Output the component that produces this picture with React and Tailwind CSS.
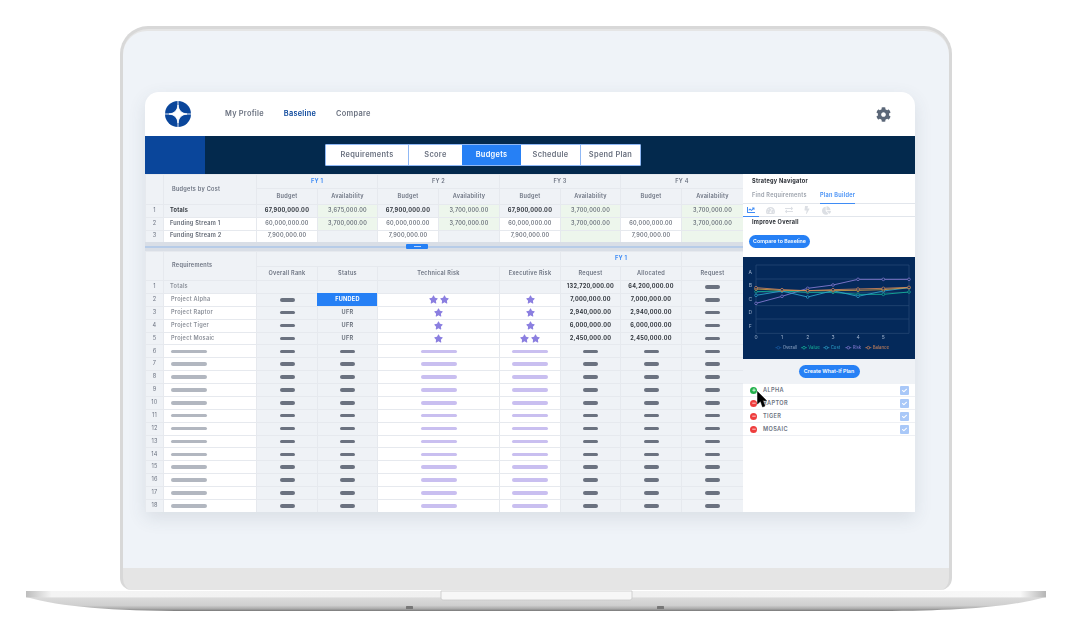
import React from "react";
import { FaCog, FaStar, FaChartLine, FaTachometerAlt, FaExchangeAlt, FaBolt, FaChartPie, FaPlus, FaMinus, FaCheck } from "react-icons/fa";

const Cell = ({ className = "", children }) => (
  <div className={"flex items-center justify-center border-l border-t border-[#e6e9ee] text-[5.6px] leading-none tracking-[0.25px] whitespace-nowrap " + className}>{children}</div>
);
const G = "bg-[#eff2f6]";
const GR = "bg-[#edf6ec]";
const W = "bg-white";
const Dark = () => <span className="block h-[3.5px] w-[15px] rounded-full bg-[#6b7280]" />;
const Gray = () => <span className="block h-[3.5px] w-[36px] rounded-full bg-[#b2b7c0]" />;
const Lav = () => <span className="block h-[3.5px] w-[36px] rounded-full bg-[#c9bff0]" />;
const Stars = ({ n }) => (
  <span className="flex items-center gap-[2px] text-[#8b7fe0]">
    {Array.from({ length: n }).map((_, i) => <FaStar key={i} size={9} />)}
  </span>
);
const num = "text-[#5f6672] font-medium";
const bold = "text-[#33383f] font-bold";

const upperRows = [
  { n: 1, label: "Totals", labelCls: `${G} text-[#33383f] font-bold`, numCls: G, cells: [["67,900,000.00", G, bold], ["3,675,000.00", GR, num], ["67,900,000.00", G, bold], ["3,700,000.00", GR, num], ["67,900,000.00", G, bold], ["3,700,000.00", GR, num], ["", G, num], ["3,700,000.00", GR, num]] },
  { n: 2, label: "Funding Stream 1", labelCls: `${W} text-[#5f6672] font-semibold`, numCls: G, cells: [["60,000,000.00", W, num], ["3,700,000.00", GR, num], ["60,000,000.00", W, num], ["3,700,000.00", GR, num], ["60,000,000.00", W, num], ["3,700,000.00", GR, num], ["60,000,000.00", W, num], ["3,700,000.00", GR, num]] },
  { n: 3, label: "Funding Stream 2", labelCls: `${W} text-[#5f6672] font-semibold`, numCls: G, cells: [["7,900,000.00", W, num], ["", G, num], ["7,900,000.00", W, num], ["", G, num], ["7,900,000.00", W, num], ["", GR, num], ["7,900,000.00", W, num], ["", GR, num]] },
];

const projects = {
  2: { name: "Project Alpha", status: "FUNDED", tech: 2, exec: 1, req: "7,000,000.00" },
  3: { name: "Project Raptor", status: "UFR", tech: 1, exec: 1, req: "2,940,000.00" },
  4: { name: "Project Tiger", status: "UFR", tech: 1, exec: 1, req: "6,000,000.00" },
  5: { name: "Project Mosaic", status: "UFR", tech: 1, exec: 2, req: "2,450,000.00" },
};

const Logo = () => (
  <svg width="26" height="26" viewBox="0 0 26 26">
    <circle cx="13" cy="13" r="13" fill="#0a469b" />
    <path d="M13 0V26M0 13H26" stroke="#fff" strokeWidth="0.9" />
    <path d="M13 4C13.8 9.6 16.4 12.2 22 13C16.4 13.8 13.8 16.4 13 22C12.2 16.4 9.6 13.8 4 13C9.6 12.2 12.2 9.6 13 4Z" fill="#fff" stroke="#fff" strokeWidth="0.8" />
  </svg>
);

const Upper = () => (
  <div className="grid grid-cols-[18px_93px_61px_60px_61px_61px_61px_60px_61px_62px] grid-rows-[14px_16px_13px_12.5px_12.5px]">
    <Cell className={`${G} row-span-2`} />
    <Cell className={`${G} row-span-2 justify-start pl-[8px] text-[#6b7280] font-semibold`}>Budgets by Cost</Cell>
    <Cell className={`${G} col-span-2 text-[#3f8cf5] font-bold`}>FY 1</Cell>
    <Cell className={`${G} col-span-2 text-[#6b7280] font-semibold`}>FY 2</Cell>
    <Cell className={`${G} col-span-2 text-[#6b7280] font-semibold`}>FY 3</Cell>
    <Cell className={`${G} col-span-2 text-[#6b7280] font-semibold`}>FY 4</Cell>
    {["Budget", "Availability", "Budget", "Availability", "Budget", "Availability", "Budget", "Availability"].map((t, i) => (
      <Cell key={i} className={`${G} text-[#6b7280] font-semibold`}>{t}</Cell>
    ))}
    {upperRows.map((r) => (
      <React.Fragment key={r.n}>
        <Cell className={`${r.numCls} text-[#6b7280]`}>{r.n}</Cell>
        <Cell className={`${r.labelCls} justify-start pl-[6px]`}>{r.label}</Cell>
        {r.cells.map(([t, bg, c], i) => <Cell key={i} className={`${bg} ${c}`}>{t}</Cell>)}
      </React.Fragment>
    ))}
  </div>
);

const Splitter = () => (
  <div className="flex h-[9px] items-center bg-[#d9dee6]">
    <div className="flex h-[2px] w-full items-center bg-[#b7cce8] pl-[261px]">
      <div className="flex h-[5px] w-[22px] shrink-0 items-center justify-center rounded-[1px] bg-[#2680f5]">
        <span className="block h-[1px] w-[7px] bg-[#bcd6fb]" />
      </div>
    </div>
  </div>
);

const Lower = () => {
  const rows = Array.from({ length: 18 }, (_, i) => i + 1);
  return (
    <div className="grid grid-cols-[18px_93px_61px_60px_122px_61px_60px_61px_62px] grid-rows-[15px_14px] auto-rows-[12.89px]">
      <Cell className={`${G} row-span-2`} />
      <Cell className={`${G} row-span-2 justify-start pl-[8px] text-[#6b7280] font-semibold`}>Requirements</Cell>
      <Cell className={`${G} col-span-4`} />
      <Cell className={`${G} col-span-2 text-[#3f8cf5] font-bold`}>FY 1</Cell>
      <Cell className={G} />
      {["Overall Rank", "Status", "Technical Risk", "Executive Risk", "Request", "Allocated", "Request"].map((t, i) => (
        <Cell key={i} className={`${G} text-[#6b7280] font-semibold`}>{t}</Cell>
      ))}
      {rows.map((n) => {
        const p = projects[n];
        if (n === 1) return (
          <React.Fragment key={n}>
            <Cell className={`${G} text-[#6b7280]`}>1</Cell>
            <Cell className={`${G} justify-start pl-[6px] text-[#8a8f98] font-semibold`}>Totals</Cell>
            <Cell className={G} /><Cell className={G} /><Cell className={G} /><Cell className={G} />
            <Cell className={`${G} ${bold}`}>132,720,000.00</Cell>
            <Cell className={`${G} ${bold}`}>64,200,000.00</Cell>
            <Cell className={G}><Dark /></Cell>
          </React.Fragment>
        );
        return (
          <React.Fragment key={n}>
            <Cell className={`${G} text-[#6b7280]`}>{n}</Cell>
            <Cell className={`${W} justify-start pl-[7px] text-[#8a8f98] font-semibold`}>{p ? p.name : <Gray />}</Cell>
            <Cell className={G}><Dark /></Cell>
            {p && p.status === "FUNDED" ? (
              <Cell className="border-transparent bg-[#2680f5] font-bold text-white">FUNDED</Cell>
            ) : (
              <Cell className={`${G} font-semibold text-[#5f6672]`}>{p ? p.status : <Dark />}</Cell>
            )}
            <Cell className={W}>{p ? <Stars n={p.tech} /> : <Lav />}</Cell>
            <Cell className={W}>{p ? <Stars n={p.exec} /> : <Lav />}</Cell>
            <Cell className={`${G} ${bold}`}>{p ? p.req : <Dark />}</Cell>
            <Cell className={`${G} ${bold}`}>{p ? p.req : <Dark />}</Cell>
            <Cell className={G}><Dark /></Cell>
          </React.Fragment>
        );
      })}
    </div>
  );
};

const X = [48, 126, 203, 279, 354, 430, 507];
const series = [
  { c: "#8d7fd8", y: [145, 124, 100, 90, 73, 73, 73] },
  { c: "#15b89c", y: [110, 108, 112, 112, 118, 118, 111] },
  { c: "#2fa8cf", y: [121, 108, 126, 107, 124, 108, 98] },
  { c: "#d9a441", y: [102, 106, 107, 107, 106, 104, 98] },
  { c: "#d98a5a", y: [98, 104, 107, 104, 102, 100, 97] },
];
const legend = [
  { x: 115, t: "Overall", c: "#1d5fa8" },
  { x: 192, t: "Value", c: "#15b89c" },
  { x: 259, t: "Cost", c: "#2fa8cf" },
  { x: 325, t: "Risk", c: "#8d7fd8" },
  { x: 385, t: "Balance", c: "#d98a5a" },
];

const Chart = () => (
  <svg width="172" height="102" viewBox="9 6 516 306" className="block bg-[#04295a]" style={{ fontFamily: "Inter, sans-serif" }}>
    {[30, 72, 112, 152, 192, 235].map((y) => <line key={y} x1="48" x2="507" y1={y} y2={y} stroke="#2c4d78" strokeWidth="2" />)}
    <line x1="48" x2="48" y1="30" y2="235" stroke="#2c4d78" strokeWidth="2" />
    <line x1="507" x2="507" y1="30" y2="235" stroke="#2c4d78" strokeWidth="2" />
    {["A", "B", "C", "D", "F"].map((t, i) => <text key={t} x="31" y={56 + i * 40.5} fill="#9fb2cc" fontSize="15" textAnchor="middle">{t}</text>)}
    {["0", "1", "2", "3", "4", "5"].map((t, i) => <text key={t} x={X[i]} y="252" fill="#9fb2cc" fontSize="15" textAnchor="middle">{t}</text>)}
    {series.map((s, i) => (
      <g key={i}>
        <polyline points={X.map((x, j) => `${x},${s.y[j]}`).join(" ")} fill="none" stroke={s.c} strokeWidth="2.5" />
        {X.map((x, j) => <circle key={j} cx={x} cy={s.y[j]} r="4" fill="#04295a" stroke={s.c} strokeWidth="2" />)}
      </g>
    ))}
    {legend.map((l) => (
      <g key={l.t}>
        <line x1={l.x - 9} x2={l.x + 9} y1="278" y2="278" stroke={l.c} strokeWidth="2" />
        <circle cx={l.x} cy="278" r="4" fill="#04295a" stroke={l.c} strokeWidth="2" />
        <text x={l.x + 13} y="282" fill={l.c === "#1d5fa8" ? "#8fa6c6" : l.c} fontSize="13">{l.t}</text>
      </g>
    ))}
  </svg>
);

const Plan = ({ name, add, children }) => (
  <div className="relative flex h-[13px] items-center border-b border-[#eef0f4] bg-white pl-[7px] pr-[6px]">
    <span className={"flex h-[7px] w-[7px] items-center justify-center rounded-full text-white " + (add ? "bg-[#22b04b]" : "bg-[#ee3d3d]")}>
      {add ? <FaPlus size={4} /> : <FaMinus size={4} />}
    </span>
    <span className="ml-[6px] text-[5.6px] font-semibold tracking-[0.35px] text-[#6b7280]">{name}</span>
    <span className="ml-auto flex h-[9px] w-[9px] items-center justify-center rounded-[1px] bg-[#a9c8f8] text-white"><FaCheck size={5} /></span>
    {children}
  </div>
);

const Side = () => (
  <div className="flex w-[172px] flex-col bg-white">
    <div className="flex h-[14px] items-center pl-[9px] pt-[1px] text-[5.6px] font-bold tracking-[0.25px] text-[#2a2e35]">Strategy Navigator</div>
    <div className="flex h-[16px] items-stretch border-b border-[#e2e6ec] pl-[9px] text-[5.6px] font-semibold tracking-[0.25px] whitespace-nowrap">
      <span className="flex w-[68px] items-center text-[#9aa0aa]">Find Requirements</span>
      <span className="-mb-px flex w-[35px] items-center border-b border-[#3f8cf5] text-[#3f8cf5]">Plan Builder</span>
    </div>
    <div className="flex h-[13px] items-stretch border-b border-[#e2e6ec] text-[#dcdfe4]">
      <span className="-mb-px flex w-[16px] items-center justify-center border-b border-[#3f8cf5] text-[#3f8cf5]"><FaChartLine size={8} /></span>
      <span className="ml-[6px] flex w-[10px] items-center justify-center"><FaTachometerAlt size={9} /></span>
      <span className="ml-[9px] flex w-[10px] items-center justify-center"><FaExchangeAlt size={8} /></span>
      <span className="ml-[8px] flex w-[10px] items-center justify-center"><FaBolt size={8} /></span>
      <span className="ml-[9px] flex w-[10px] items-center justify-center"><FaChartPie size={9} /></span>
    </div>
    <div className="flex h-[40px] flex-col items-start pl-[6px]">
      <div className="mt-[1px] pl-[3px] text-[5.6px] font-bold leading-[8px] tracking-[0.25px] text-[#2a2e35]">Improve Overall</div>
      <div className="mt-[9px] flex h-[13px] w-[61px] items-center justify-center rounded-full bg-[#2680f5] text-[5.3px] font-semibold text-white">Compare to Baseline</div>
    </div>
    <Chart />
    <div className="flex h-[25px] items-center justify-center bg-[#eff2f6]">
      <div className="flex h-[13px] w-[61px] items-center justify-center rounded-full bg-[#2680f5] text-[5.3px] font-semibold text-white">Create What-If Plan</div>
    </div>
    <Plan name="ALPHA" add>
      <svg width="10" height="17" viewBox="0 0 10 17" className="absolute left-[14px] top-[7px] z-10">
        <path d="M0.5 0.5V13L3.5 10.2L5.6 16L8 15L5.8 9.6H9.5Z" fill="#000" stroke="#000" strokeWidth="0.5" />
      </svg>
    </Plan>
    <Plan name="RAPTOR" />
    <Plan name="TIGER" />
    <Plan name="MOSAIC" />
  </div>
);

const AppWindow = () => (
  <div className="h-[420px] w-[770px] overflow-hidden rounded-t-[14px] bg-white shadow-[0_6px_18px_rgba(60,70,90,0.12)] blur-[0.4px]" style={{ fontFamily: "Inter, 'Liberation Sans', sans-serif" }}>
    <div className="flex h-[44px] items-center pl-[20px] pr-[24px]">
      <Logo />
      <nav className="ml-[34px] flex gap-[20px] text-[7.4px] font-semibold tracking-[0.25px]">
        <span className="text-[#6b7280]">My Profile</span>
        <span className="text-[#0a469b]">Baseline</span>
        <span className="text-[#6b7280]">Compare</span>
      </nav>
      <FaCog size={15} className="ml-auto text-[#5b6778]" />
    </div>
    <div className="flex h-[38px] bg-[#03294d]">
      <div className="w-[60px] bg-[#0a469b]" />
      <div className="ml-[120px] mt-[8px] flex h-[22px] overflow-hidden rounded-[1px] border border-[#8fb8f5] bg-white text-[7.4px] font-semibold tracking-[0.3px] text-[#6b7280]">
        <div className="flex w-[83px] items-center justify-center border-r border-[#8fb8f5]">Requirements</div>
        <div className="flex w-[53px] items-center justify-center">Score</div>
        <div className="flex w-[59px] items-center justify-center bg-[#2680f5] text-white">Budgets</div>
        <div className="flex w-[60px] items-center justify-center border-r border-[#8fb8f5]">Schedule</div>
        <div className="flex w-[59px] items-center justify-center">Spend Plan</div>
      </div>
    </div>
    <div className="flex">
      <div className="w-[598px]">
        <Upper />
        <Splitter />
        <Lower />
      </div>
      <Side />
    </div>
  </div>
);

const Base = () => (
  <svg width="1072" height="22" viewBox="0 0 1072 22" className="block">
    <defs>
      <linearGradient id="body" x1="0" x2="0" y1="0" y2="1">
        <stop offset="0" stopColor="#dcdcdc" />
        <stop offset="0.6" stopColor="#cfcfcf" />
        <stop offset="0.85" stopColor="#a8a8a8" />
        <stop offset="1" stopColor="#777" />
      </linearGradient>
      <linearGradient id="strip" x1="0" x2="1" y1="0" y2="0">
        <stop offset="0" stopColor="#bdbdbd" />
        <stop offset="0.025" stopColor="#f4f4f4" />
        <stop offset="0.5" stopColor="#efefef" />
        <stop offset="0.975" stopColor="#f8f8f8" />
        <stop offset="1" stopColor="#b5b5b5" />
      </linearGradient>
    </defs>
    <path d="M26 7H1046V7C1010 17 960 21 880 21H190C110 21 62 17 26 7Z" fill="url(#body)" />
    <rect x="26" y="1" width="1020" height="6.4" fill="url(#strip)" />
    <path d="M441 1H632V8Q632 10 630 10H443Q441 10 441 8Z" fill="#f7f7f7" stroke="#c8c8c8" strokeWidth="0.8" />
    <rect x="406" y="16" width="7" height="3" rx="0.5" fill="#777" />
    <rect x="657" y="16" width="7" height="3" rx="0.5" fill="#777" />
  </svg>
);

export default function App() {
  return (
    <div className="h-[636px] w-[1072px] overflow-hidden bg-white pt-[26px]">
      <div className="ml-[120px] h-[564px] w-[832px] rounded-t-[28px] rounded-b-[12px] border-[3px] border-b-0 border-[#d8d8d8] bg-[#e5e5e5] pt-[2px]">
        <div className="h-[537px] rounded-t-[24px] bg-[#eff3f8] pl-[22px] pt-[61px]">
          <AppWindow />
        </div>
      </div>
      <Base />
    </div>
  );
}
